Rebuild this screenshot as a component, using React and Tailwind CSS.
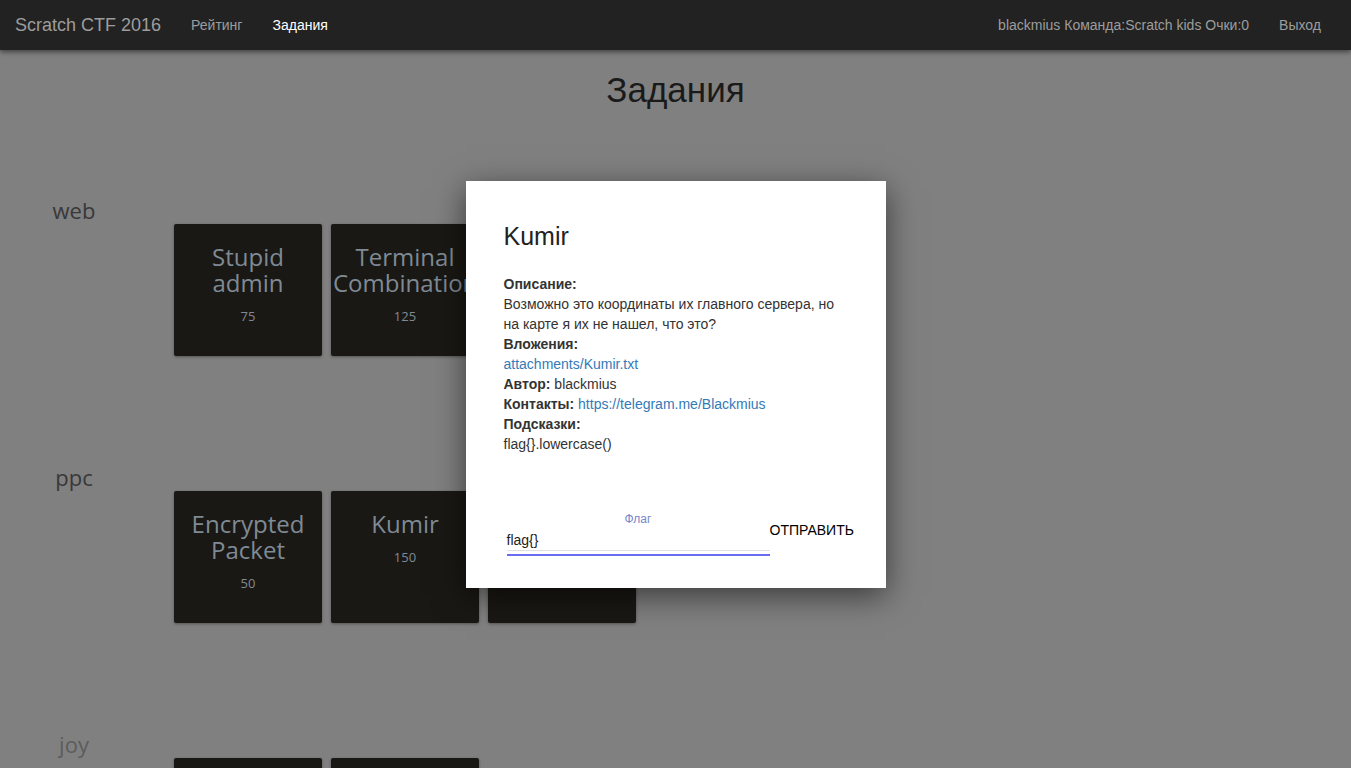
import React from 'react';

const sections = [
    {
        name: 'web',
        labelColor: 'text-[#383838]',
        tasks: [
            { title: 'Stupid admin', points: 75 },
            { title: 'Terminal Combination', points: 125 },
            { title: 'Hidden', points: 100 },
        ],
    },
    {
        name: 'ppc',
        labelColor: 'text-[#383838]',
        tasks: [
            { title: 'Encrypted Packet', points: 50 },
            { title: 'Kumir', points: 150 },
            { title: 'Hidden', points: 200 },
        ],
    },
    {
        name: 'joy',
        labelColor: 'text-[#5c5c5c]',
        tasks: [
            { title: 'Joy one', points: 10 },
            { title: 'Joy two', points: 20 },
        ],
    },
];

const TaskCard = ({ title, points }) => (
    <div className="w-[148px] h-[132px] bg-[#1a1814] rounded-[2px] shadow-[0_1px_3px_rgba(0,0,0,0.35)] px-[2px] pt-[20px] text-center font-['Open_Sans',sans-serif] text-[#7f8a94]">
        <div className="text-[24px] leading-[26px]">{title}</div>
        <div className="mt-[10px] text-[13px] leading-[20px]">{points}</div>
    </div>
);

const Navbar = () => (
    <nav className="relative z-20 h-[50px] bg-[#222] shadow-[0_2px_5px_rgba(0,0,0,0.5)] flex items-center justify-between font-['Liberation_Sans',Arial,sans-serif]">
        <div className="flex items-center">
            <a className="px-[15px] text-[18px] leading-[50px] text-[#9d9d9d]">Scratch CTF 2016</a>
            <a className="px-[15px] text-[14px] leading-[50px] text-[#9d9d9d]">Рейтинг</a>
            <a className="px-[15px] text-[14px] leading-[50px] text-white">Задания</a>
        </div>
        <div className="flex items-center mr-[15px]">
            <span className="px-[15px] text-[14px] leading-[50px] text-[#9d9d9d]">blackmius Команда:Scratch kids Очки:0</span>
            <a className="px-[15px] text-[14px] leading-[50px] text-[#9d9d9d]">Выход</a>
        </div>
    </nav>
);

const Modal = () => (
    <div className="absolute inset-x-0 top-[181px] z-30 flex justify-center">
        <div className="w-[420px] h-[407px] bg-white shadow-[0_8px_30px_rgba(0,0,0,0.55)] flex flex-col px-[38px] pt-[40px] pb-[32px] font-['Liberation_Sans',Arial,sans-serif] text-[#333]">
            <h4 className="text-[25px] leading-[30px] text-[#222]">Kumir</h4>
            <div className="mt-[23px] text-[14px] leading-[20px]">
                <div className="font-bold">Описание:</div>
                <div>Возможно это координаты их главного сервера, но на карте я их не нашел, что это?</div>
                <div className="font-bold">Вложения:</div>
                <a className="block text-[#337ab7]">attachments/Kumir.txt</a>
                <div><span className="font-bold">Автор:</span> blackmius</div>
                <div><span className="font-bold">Контакты:</span> <a className="text-[#337ab7]">https://telegram.me/Blackmius</a></div>
                <div className="font-bold">Подсказки:</div>
                <div>flag{'{}'}.lowercase()</div>
            </div>
            <div className="mt-auto flex items-start">
                <div className="ml-[3px] w-[263px] shrink-0">
                    <div className="text-center text-[12px] leading-[14px] text-[#7986cb]">Флаг</div>
                    <div className="mt-[5px] text-[14px] leading-[19px] text-[#222] border-b border-[#e0e0e0]">flag{'{}'}</div>
                    <div className="mt-[3px] h-[2px] bg-[#6b6bf0]"></div>
                </div>
                <button className="shrink-0 mt-[8px] text-[14px] leading-[20px] text-black uppercase">Отправить</button>
            </div>
        </div>
    </div>
);

export default function App() {
    return (
        <div className="relative min-h-[768px] bg-[#808080] overflow-hidden">
            <Navbar />
            <h1 className="mt-[20px] text-center text-[35px] leading-[40px] text-[#1a1a1a] font-['Liberation_Sans',Arial,sans-serif]">Задания</h1>
            <div className="mt-[88px] flex flex-col gap-[109px]">
                {sections.map((s) => (
                    <div key={s.name}>
                        <div className={`w-[148px] text-center text-[22px] leading-[24px] font-['Open_Sans',sans-serif] ${s.labelColor}`}>{s.name}</div>
                        <div className="ml-[174px] mt-[2px] flex gap-[9px]">
                            {s.tasks.map((t, i) => (
                                <TaskCard key={i} {...t} />
                            ))}
                        </div>
                    </div>
                ))}
            </div>
            <Modal />
        </div>
    );
}
